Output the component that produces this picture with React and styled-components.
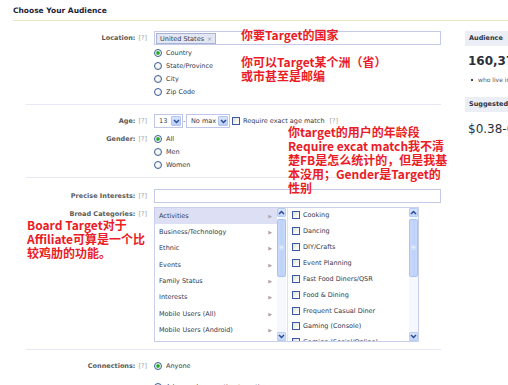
import React from "react";
import styled, { createGlobalStyle, css } from "styled-components";

const Global = createGlobalStyle`
  html, body { margin: 0; padding: 0; background: #fff; }
  body {
    width: 508px; height: 385px; overflow: hidden;
    font-family: "DejaVu Sans", Verdana, sans-serif;
    font-size: 6.5px; color: #333a4c;
  }
`;

const Page = styled.div`
  position: relative;
  width: 508px;
  height: 385px;
  overflow: hidden;
`;

const Title = styled.div`
  margin: 4px 0 0 13px;
  padding-bottom: 2px;
  border-bottom: 1px solid #ebe7c6;
  font-size: 7.5px;
  font-weight: bold;
  line-height: 14px;
  color: #1f2538;
`;

const Columns = styled.div`
  display: flex;
  align-items: flex-start;
  padding-top: 10px;
`;

const Form = styled.div`
  flex: 0 0 428px;
  margin-left: 13px;
  display: flex;
  flex-direction: column;
`;

const Row = styled.div`
  display: grid;
  grid-template-columns: 134px 1fr;
  column-gap: 7px;
  align-items: start;
  margin-top: ${(p) => p.$top || 0}px;
`;

const Label = styled.div`
  text-align: right;
  font-weight: bold;
  color: #5b5b5b;
  line-height: ${(p) => p.$lh || 14}px;
  white-space: nowrap;
`;

const Help = styled.span`
  font-weight: normal;
  color: #a0a0a0;
  margin-left: 3px;
`;

const Control = styled.div`
  display: flex;
  flex-direction: column;
  min-width: 0;
`;

const Divider = styled.div`
  height: 1px;
  background: #e6e8f5;
  margin: ${(p) => p.$top}px 0 0 13px;
`;

const TextBox = styled.div`
  box-sizing: border-box;
  height: 14px;
  width: 100%;
  border: 1px solid #c4cae8;
  background: #fff;
  display: flex;
  align-items: flex-start;
`;

const Token = styled.span`
  box-sizing: border-box;
  height: 11px;
  margin: 1px 0 0 1px;
  padding: 0 3px 0 3px;
  border: 1px solid #a7b4d8;
  background: #e3e7f3;
  display: inline-flex;
  align-items: center;
  gap: 3px;
  color: #333a4c;
`;

const TokenX = styled.span`
  color: #8e96ad;
  font-size: 6px;
`;

const RadioList = styled.div`
  display: flex;
  flex-direction: column;
  margin-top: ${(p) => p.$top || 0}px;
`;

const RadioRow = styled.div`
  display: flex;
  align-items: center;
  gap: 4px;
  height: ${(p) => p.$h || 13}px;
  margin-top: ${(p) => p.$top || 0}px;
  white-space: nowrap;
`;

const Radio = styled.span`
  flex: none;
  box-sizing: border-box;
  width: 8px;
  height: 8px;
  border-radius: 50%;
  border: 1px solid #3a5d9c;
  background: radial-gradient(circle at 40% 40%, #ffffff 0%, #f4f4ef 45%, #dcdcd2 100%);
  ${(p) =>
    p.$on &&
    css`
      background: radial-gradient(circle, #1e9e1e 0, #2aa82a 1.3px, #b5e2ae 2px, #ffffff 2.7px, #e2e2da 100%);
    `}
`;

const Inline = styled.div`
  display: flex;
  align-items: center;
  height: 14px;
  white-space: nowrap;
`;

const Select = styled.div`
  box-sizing: border-box;
  width: ${(p) => p.$w}px;
  height: 14px;
  border: 1px solid #bfc6e8;
  display: flex;
  align-items: center;
  justify-content: space-between;
  padding: 0 1px 0 4px;
  color: #333a4c;
`;

const SelectBtn = styled.span`
  box-sizing: border-box;
  width: 10px;
  height: 10px;
  border: 1px solid #b1c5f2;
  border-radius: 1px;
  background: linear-gradient(#dbe6fe, #b9cdf8);
  display: flex;
  align-items: center;
  justify-content: center;
`;

const Dash = styled.span`
  width: 3px;
  text-align: center;
  color: #555;
`;

const Check = styled.span`
  flex: none;
  box-sizing: border-box;
  width: 8px;
  height: 8px;
  border: 1px solid #3d5c9e;
  background: linear-gradient(135deg, #dedcd3 0%, #f6f6f2 60%, #ffffff 100%);
`;

const CheckLabel = styled.span`
  margin-left: 3px;
  color: #333a4c;
`;

const CatBox = styled.div`
  box-sizing: border-box;
  width: 265px;
  height: 135px;
  border: 1px solid #c9ceeb;
  display: flex;
  overflow: hidden;
`;

const CatList = styled.div`
  flex: 0 0 ${(p) => p.$w}px;
  overflow: hidden;
  display: flex;
  flex-direction: column;
  ${(p) => p.$sep && css`border-left: 1px solid #dfe2f3;`}
`;

const CatRow = styled.div`
  flex: none;
  height: 16.33px;
  display: flex;
  align-items: center;
  justify-content: space-between;
  padding: 0 5px 0 4px;
  background: ${(p) => (p.$sel ? "#dde0f5" : "transparent")};
  white-space: nowrap;
`;

const CatArrow = styled.span`
  color: #a9a9b3;
  font-size: 5px;
`;

const CheckRow = styled.div`
  flex: none;
  height: 15.86px;
  display: flex;
  align-items: center;
  padding-left: 4px;
  white-space: nowrap;
`;

const Scroll = styled.div`
  flex: 0 0 9px;
  margin-right: 1px;
  display: flex;
  flex-direction: column;
  background: #f6f8fd;
`;

const ScrollBtn = styled.span`
  box-sizing: border-box;
  width: 9px;
  height: 9px;
  border: 1px solid #b6cdf5;
  border-radius: 1px;
  background: linear-gradient(#dae6fd, #c1d5fb);
  display: flex;
  align-items: center;
  justify-content: center;
`;

const Thumb = styled.span`
  box-sizing: border-box;
  margin-top: 2px;
  height: 58px;
  border: 1px solid #a8c3f2;
  border-radius: 2px;
  background: linear-gradient(90deg, #c9dafb, #bcd2fa 60%, #c9dafb);
  display: flex;
  align-items: center;
  justify-content: center;
`;

const Track = styled.span`
  flex: 1;
`;

const Side = styled.div`
  flex: 0 0 140px;
  margin-left: 24px;
  display: flex;
  flex-direction: column;
`;

const SideHead = styled.div`
  height: 15px;
  line-height: 15px;
  padding-left: 4px;
  background: #eceef5;
  font-weight: bold;
  color: #2e3343;
  margin-top: ${(p) => p.$top || 0}px;
`;

const BigNum = styled.div`
  margin-top: ${(p) => p.$top}px;
  padding-left: 3px;
  font-size: 12px;
  line-height: 14px;
  font-weight: ${(p) => (p.$bold ? "bold" : "normal")};
  color: #2b2f3c;
  white-space: nowrap;
`;

const Bullet = styled.div`
  margin-top: 7px;
  padding-left: 6px;
  line-height: 10px;
  font-size: 6px;
  color: #555;
  white-space: nowrap;
  &::before {
    content: "";
    display: inline-block;
    width: 2px;
    height: 2px;
    background: #444;
    margin-right: 5px;
    vertical-align: middle;
  }
`;

const Note = styled.div`
  position: absolute;
  left: ${(p) => p.$x}px;
  top: ${(p) => p.$y}px;
  font-family: "Noto Sans CJK SC", "Noto Sans", sans-serif;
  font-weight: bold;
  font-size: 12px;
  line-height: 14px;
  color: #ea1c26;
  white-space: nowrap;
`;

const Chevron = ({ up, color = "#2a4a9a" }) => (
  <svg width="7" height="5" viewBox="0 0 7 5">
    <polyline
      points={up ? "1,4 3.5,1.5 6,4" : "1,1 3.5,3.5 6,1"}
      fill="none"
      stroke={color}
      strokeWidth="1.5"
    />
  </svg>
);

const Grip = () => (
  <svg width="5" height="5" viewBox="0 0 5 5">
    <path d="M0.5 1h4M0.5 2.5h4M0.5 4h4" stroke="#f2f6ff" strokeWidth="0.8" />
  </svg>
);

const Scrollbar = () => (
  <Scroll>
    <ScrollBtn>
      <Chevron up />
    </ScrollBtn>
    <Thumb>
      <Grip />
    </Thumb>
    <Track />
    <ScrollBtn>
      <Chevron />
    </ScrollBtn>
  </Scroll>
);

const categories = [
  "Activities",
  "Business/Technology",
  "Ethnic",
  "Events",
  "Family Status",
  "Interests",
  "Mobile Users (All)",
  "Mobile Users (Android)",
];

const activities = [
  "Cooking",
  "Dancing",
  "DIY/Crafts",
  "Event Planning",
  "Fast Food Diners/QSR",
  "Food & Dining",
  "Frequent Casual Diner",
  "Gaming (Console)",
  "Gaming (Social/Online)",
];

export default function App() {
  return (
    <Page>
      <Global />
      <Title>Choose Your Audience</Title>
      <Columns>
        <Form>
          <Row>
            <Label $lh={14}>
              Location:<Help>[?]</Help>
            </Label>
            <Control>
              <TextBox>
                <Token>
                  United States<TokenX>×</TokenX>
                </Token>
              </TextBox>
              <RadioList $top={1.5}>
                <RadioRow>
                  <Radio $on />
                  Country
                </RadioRow>
                <RadioRow>
                  <Radio />
                  State/Province
                </RadioRow>
                <RadioRow>
                  <Radio />
                  City
                </RadioRow>
                <RadioRow>
                  <Radio />
                  Zip Code
                </RadioRow>
              </RadioList>
            </Control>
          </Row>

          <Divider $top={5.5} />

          <Row $top={9}>
            <Label $lh={14}>
              Age:<Help>[?]</Help>
            </Label>
            <Inline>
              <Select $w={29}>
                13
                <SelectBtn>
                  <Chevron />
                </SelectBtn>
              </Select>
              <Dash>-</Dash>
              <Select $w={44}>
                No max
                <SelectBtn>
                  <Chevron />
                </SelectBtn>
              </Select>
              <Check style={{ marginLeft: 2 }} />
              <CheckLabel>Require exact age match</CheckLabel>
              <Help style={{ marginLeft: 5 }}>[?]</Help>
            </Inline>
          </Row>

          <Row $top={4.5}>
            <Label $lh={13}>
              Gender:<Help>[?]</Help>
            </Label>
            <RadioList>
              <RadioRow>
                <Radio $on />
                All
              </RadioRow>
              <RadioRow>
                <Radio />
                Men
              </RadioRow>
              <RadioRow>
                <Radio />
                Women
              </RadioRow>
            </RadioList>
          </Row>

          <Divider $top={5.5} />

          <Row $top={10.5}>
            <Label $lh={14}>
              Precise Interests:<Help>[?]</Help>
            </Label>
            <TextBox />
          </Row>

          <Row $top={4}>
            <Label $lh={14}>
              Broad Categories:<Help>[?]</Help>
            </Label>
            <CatBox>
              <CatList $w={122}>
                {categories.map((c, i) => (
                  <CatRow key={c} $sel={i === 0}>
                    {c}
                    <CatArrow>▶</CatArrow>
                  </CatRow>
                ))}
              </CatList>
              <Scrollbar />
              <CatList $w={121} $sep>
                {activities.map((a) => (
                  <CheckRow key={a}>
                    <Check />
                    <CheckLabel>{a}</CheckLabel>
                  </CheckRow>
                ))}
              </CatList>
              <Scrollbar />
            </CatBox>
          </Row>

          <Divider $top={7.5} />

          <Row $top={9.5}>
            <Label $lh={13}>
              Connections:<Help>[?]</Help>
            </Label>
            <RadioList>
              <RadioRow>
                <Radio $on />
                Anyone
              </RadioRow>
              <RadioRow $top={8}>
                <Radio />
                Advanced connection targeting
              </RadioRow>
            </RadioList>
          </Row>
        </Form>

        <Side>
          <SideHead>Audience</SideHead>
          <BigNum $top={8} $bold>
            160,376,000
          </BigNum>
          <Bullet>who live in the United States</Bullet>
          <SideHead $top={12}>Suggested Bid</SideHead>
          <BigNum $top={10}>$0.38-0.65 USD</BigNum>
        </Side>
      </Columns>

      <Note $x={241} $y={28}>你要Target的国家</Note>
      <Note $x={241} $y={55}>
        你可以Target某个洲（省）
        <br />
        或市甚至是邮编
      </Note>
      <Note $x={288} $y={125}>
        你target的用户的年龄段
        <br />
        Require excat match我不清
        <br />
        楚FB是怎么统计的，但是我基
        <br />
        本没用；Gender是Target的
        <br />
        性别
      </Note>
      <Note $x={27} $y={218}>
        Board Target对于
        <br />
        Affiliate可算是一个比
        <br />
        较鸡肋的功能。
      </Note>
    </Page>
  );
}
